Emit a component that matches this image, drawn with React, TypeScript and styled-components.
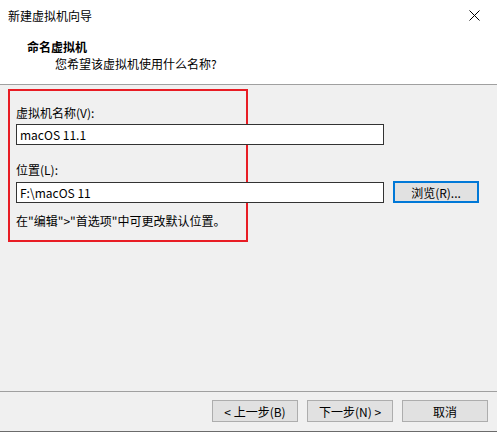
import React from "react";
import styled, { createGlobalStyle } from "styled-components";

const Global = createGlobalStyle`
  html, body { margin: 0; padding: 0; background: #f0f0f0; }
  body { font-family: "Segoe UI", "Noto Sans CJK SC", "Noto Sans", sans-serif; font-size: 12px; color: #000; }
  * { box-sizing: border-box; }
`;

const Window = styled.div`
  width: 497px;
  height: 432px;
  display: flex;
  flex-direction: column;
  background: #f0f0f0;
  border-bottom: 1px solid #6b6b6b;
`;

const TitleBar = styled.div`
  height: 30px;
  background: #fff;
  display: flex;
  align-items: center;
  justify-content: space-between;
  padding-left: 8px;
  font-size: 12px;
`;

const CloseBtn = styled.div`
  width: 46px;
  height: 30px;
  display: flex;
  align-items: center;
  justify-content: center;
`;

const Header = styled.div`
  height: 55px;
  background: #fff;
  border-bottom: 1px solid #a0a0a0;
  display: flex;
  flex-direction: column;
  padding-top: 8px;
`;

const HeaderTitle = styled.div`
  font-weight: bold;
  font-size: 12px;
  padding-left: 27px;
  line-height: 17px;
`;

const HeaderSub = styled.div`
  padding-left: 55px;
  line-height: 17px;
`;

const Body = styled.div`
  flex: 1;
  padding: 4px 0 0 8px;
`;

const Highlight = styled.div`
  width: 240px;
  height: 153px;
  border: 2px solid #e81c24;
  padding: 13px 0 0 6px;
  display: flex;
  flex-direction: column;
`;

const Label = styled.div`
  line-height: 17px;
  height: 17px;
  margin-bottom: 3px;
`;

const Row = styled.div`
  display: flex;
  align-items: center;
  gap: 9px;
`;

const Input = styled.div`
  width: 368px;
  height: 21px;
  background: #fff;
  border: 1px solid #333;
  display: flex;
  align-items: center;
  padding-left: 3px;
  flex-shrink: 0;
`;

const Spacer = styled.div<{ h: number }>`
  height: ${(p) => p.h}px;
`;

const Button = styled.div<{ focused?: boolean }>`
  width: 86px;
  height: 22px;
  background: #e1e1e1;
  border: ${(p) => (p.focused ? "2px solid #0078d7" : "1px solid #adadad")};
  display: flex;
  align-items: center;
  justify-content: center;
  flex-shrink: 0;
`;

const Hint = styled.div`
  margin-top: 9px;
  line-height: 17px;
`;

const Footer = styled.div`
  height: 40px;
  border-top: 1px solid #a0a0a0;
  display: flex;
  justify-content: flex-end;
  align-items: flex-start;
  padding: 8px 9px 0 0;
  gap: 9px;
`;

const Pair = styled.div`
  display: flex;
  gap: 9px;
`;

export default function App() {
  return (
    <>
      <Global />
      <Window>
        <TitleBar>
          <span>新建虚拟机向导</span>
          <CloseBtn>
            <svg width="11" height="11" viewBox="0 0 11 11">
              <path d="M0.5 0.5 L10.5 10.5 M10.5 0.5 L0.5 10.5" stroke="#000" strokeWidth="1" />
            </svg>
          </CloseBtn>
        </TitleBar>
        <Header>
          <HeaderTitle>命名虚拟机</HeaderTitle>
          <HeaderSub>您希望该虚拟机使用什么名称?</HeaderSub>
        </Header>
        <Body>
          <Highlight>
            <Label>虚拟机名称(V):</Label>
            <Input>macOS 11.1</Input>
            <Spacer h={16} />
            <Label>位置(L):</Label>
            <Row>
              <Input>F:\macOS 11</Input>
              <Button focused>浏览(R)...</Button>
            </Row>
            <Hint>在"编辑"&gt;"首选项"中可更改默认位置。</Hint>
          </Highlight>
        </Body>
        <Footer>
          <Pair>
            <Button>&lt; 上一步(B)</Button>
            <Button>下一步(N) &gt;</Button>
          </Pair>
          <Button>取消</Button>
        </Footer>
      </Window>
    </>
  );
}
